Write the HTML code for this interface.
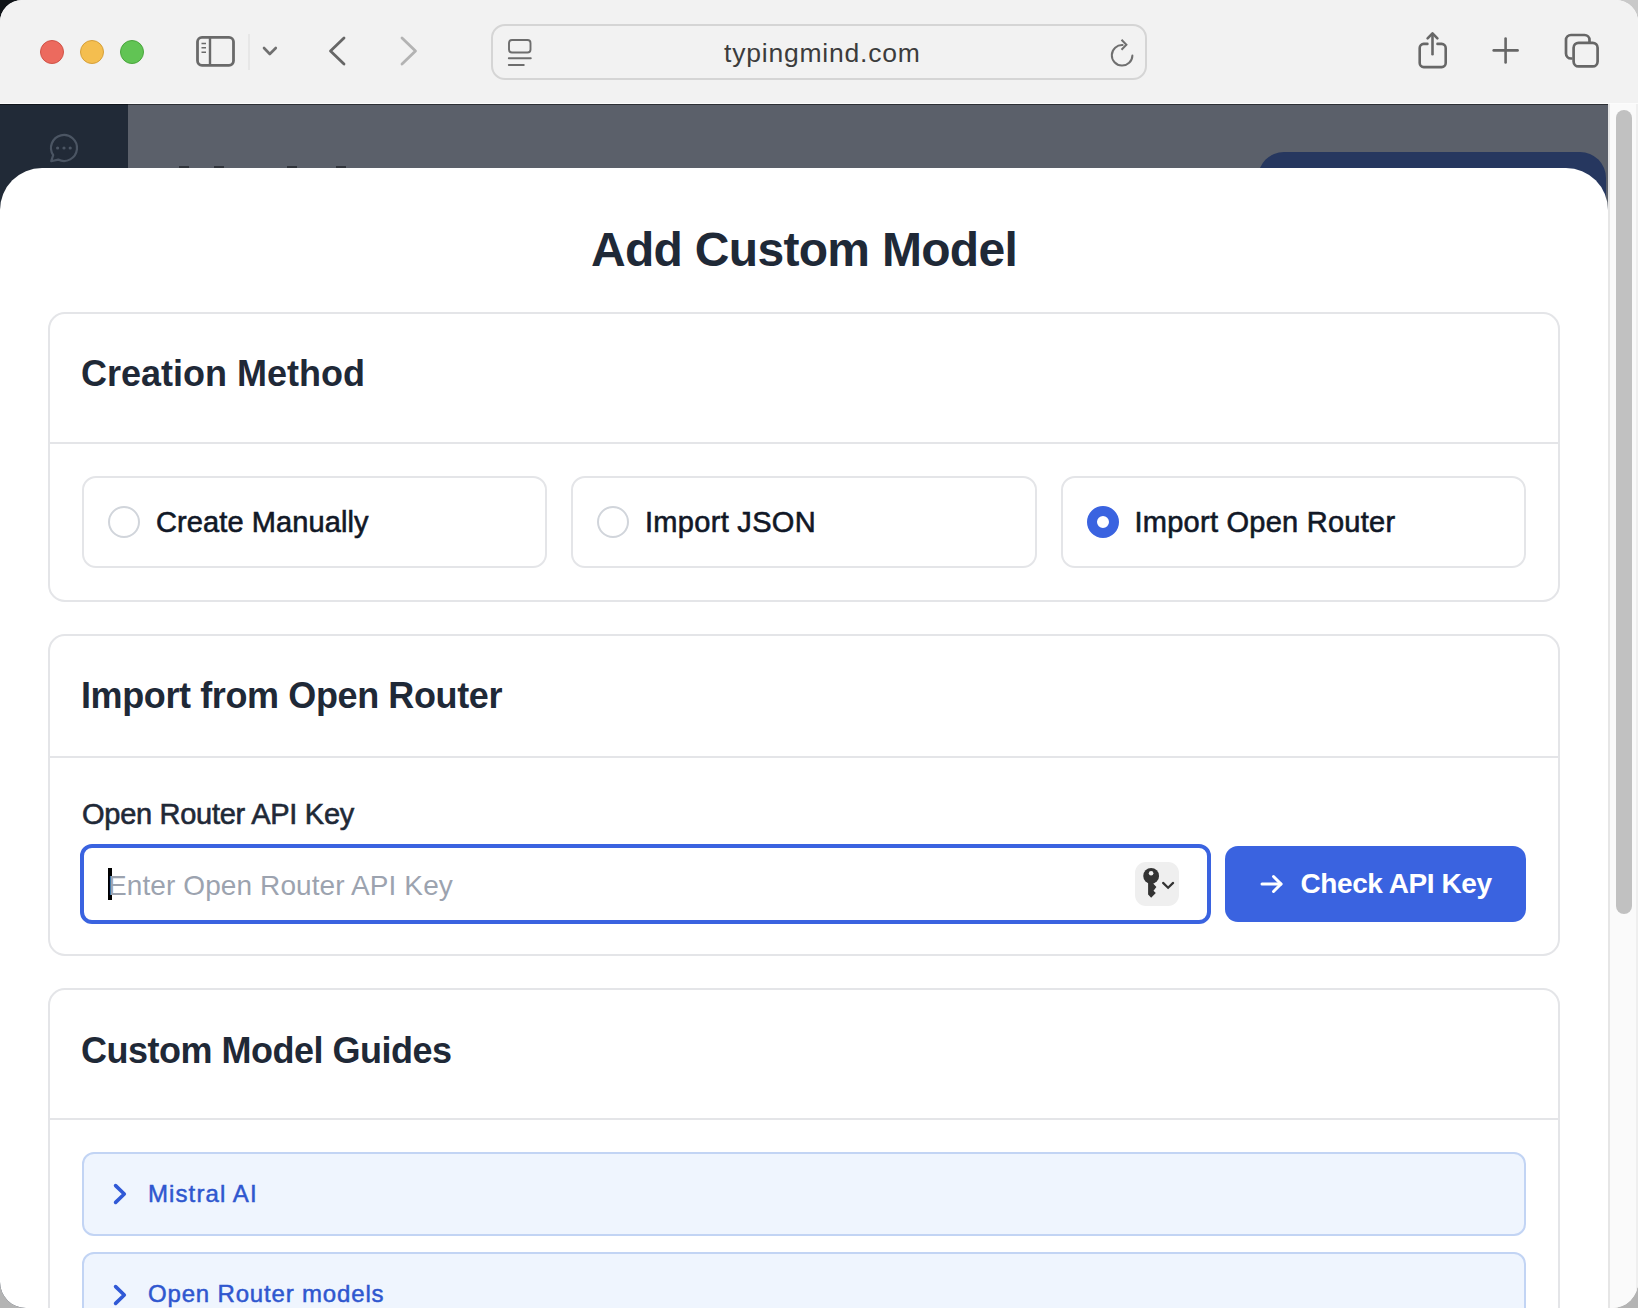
<!DOCTYPE html>
<html><head><meta charset="utf-8">
<style>
*{box-sizing:border-box;margin:0;padding:0}
html,body{width:1638px;height:1308px;overflow:hidden;background:#b4b4b4;font-family:"Liberation Sans",sans-serif}
.abs{position:absolute}
#c-tl{left:0;top:0;width:30px;height:30px;background:#101418}
#c-tr{right:0;top:0;width:30px;height:30px;background:#c9c9c9}
#win{position:absolute;left:0;top:0;width:1638px;height:1308px;border-radius:22px 22px 26px 26px;overflow:hidden;background:#fff}
#toolbar{left:0;top:0;width:1638px;height:104px;background:#f2f2f2}
.tl{position:absolute;width:24px;height:24px;border-radius:50%}
#url{left:491px;top:24px;width:656px;height:56px;border:2px solid #d5d5d5;border-radius:14px}
#urltext{left:724px;top:24.8px;height:56px;line-height:56px;font-size:26.5px;letter-spacing:0.79px;color:#3c3c3c;white-space:nowrap}
#content{left:0;top:104px;width:1608px;height:1204px;background:#5b606a;overflow:hidden}
#sidebar{left:0;top:0;width:128px;height:1204px;background:#212a37}
#topline{left:0;top:104px;width:1608px;height:1px;background:rgba(0,0,0,0.5)}
#wline{left:0;top:103px;width:1638px;height:1px;background:#fcfcfc}
#bgbtn{left:1258px;top:48px;width:348px;height:120px;background:#26375f;border-radius:26px}
#scroll{left:1608px;top:104px;width:30px;height:1204px;background:#fafafa;border-left:2px solid #e6e6e6;border-right:2px solid #efefef}
#thumb{left:1616px;top:110px;width:16px;height:804px;background:#c1c1c1;border-radius:8px}
#modal{left:0;top:168px;width:1608px;height:1200px;background:#fff;border-radius:42px 42px 0 0}
.card{position:absolute;left:48px;width:1512px;border:2px solid #e4e5e8;border-radius:17px;background:#fff}
.hline{position:absolute;left:48px;width:1512px;height:2px;background:#e4e5e8}
.h2{position:absolute;font-weight:bold;color:#1f2937;white-space:nowrap;line-height:1}
.opt{position:absolute;top:476px;height:92px;border:2px solid #e4e5e8;border-radius:14px}
.radio{position:absolute;width:32px;height:32px;border-radius:50%;border:2px solid #d1d5db;top:506px}
.otxt{position:absolute;font-size:28px;color:#111827;white-space:nowrap;line-height:1;-webkit-text-stroke:0.6px currentColor}
.acc{position:absolute;left:82px;width:1444px;height:84px;background:#eff5fe;border:2px solid #c2d4f4;border-radius:12px}
.atxt{position:absolute;font-size:25px;color:#2f57cf;white-space:nowrap;line-height:1;-webkit-text-stroke:0.5px currentColor}
</style></head><body>
<div class="abs" id="c-tl"></div><div class="abs" id="c-tr"></div>
<div id="win">
  <div class="abs" id="toolbar">
    <div class="tl" style="left:40px;top:40px;background:#ec6a5e;border:1px solid #d05347"></div>
    <div class="tl" style="left:80px;top:40px;background:#f4be4f;border:1px solid #d6a03a"></div>
    <div class="tl" style="left:120px;top:40px;background:#61c454;border:1px solid #4aa63d"></div>
    <svg class="abs" style="left:180px;top:20px" width="260" height="60" viewBox="0 0 260 60">
      <rect x="17.5" y="17.3" width="36" height="28" rx="4.5" fill="none" stroke="#6a6a6a" stroke-width="2.8"/>
      <line x1="30" y1="17" x2="30" y2="45.5" stroke="#6a6a6a" stroke-width="2.4"/>
      <line x1="21.5" y1="23.5" x2="26" y2="23.5" stroke="#6a6a6a" stroke-width="1.6"/>
      <line x1="21.5" y1="27.8" x2="26" y2="27.8" stroke="#6a6a6a" stroke-width="1.6"/>
      <line x1="21.5" y1="32.2" x2="26" y2="32.2" stroke="#6a6a6a" stroke-width="1.6"/>
      <line x1="69" y1="14" x2="69" y2="50" stroke="#dcdcdc" stroke-width="1"/>
      <polyline points="84,28 89.8,34 95.8,28" fill="none" stroke="#707070" stroke-width="2.6" stroke-linecap="round" stroke-linejoin="round"/>
      <polyline points="164,18 150.5,31 164,44" fill="none" stroke="#666" stroke-width="2.8" stroke-linecap="round" stroke-linejoin="round"/>
      <polyline points="222,18 235.5,31 222,44" fill="none" stroke="#b3b3b3" stroke-width="2.8" stroke-linecap="round" stroke-linejoin="round"/>
    </svg>
    <div class="abs" id="url"></div>
    <div class="abs" id="urltext">typingmind.com</div>
    <svg class="abs" style="left:500px;top:30px" width="40" height="44" viewBox="0 0 40 44">
      <rect x="9" y="10" width="21.5" height="12.5" rx="3" fill="none" stroke="#6d6d6d" stroke-width="1.9"/>
      <line x1="8.8" y1="28.2" x2="30.8" y2="28.2" stroke="#6d6d6d" stroke-width="1.9" stroke-linecap="round"/>
      <line x1="8.8" y1="35" x2="23.8" y2="35" stroke="#6d6d6d" stroke-width="1.9" stroke-linecap="round"/>
    </svg>
    <svg class="abs" style="left:1100px;top:30px" width="44" height="44" viewBox="0 0 44 44">
      <path d="M32.4 25.6 A10.3 10.3 0 1 1 22.6 15" fill="none" stroke="#6f6f6f" stroke-width="2" stroke-linecap="round"/>
      <polyline points="21.5,9.7 26.4,14.7 21.5,19.7" fill="none" stroke="#6f6f6f" stroke-width="2" stroke-linecap="butt" stroke-linejoin="miter"/>
    </svg>
    <svg class="abs" style="left:1400px;top:20px" width="220" height="60" viewBox="0 0 220 60">
      <path d="M27.4 23.9 H23.7 a4 4 0 0 0 -4 4 V43.1 a4 4 0 0 0 4 4 H41.7 a4 4 0 0 0 4 -4 V27.9 a4 4 0 0 0 -4 -4 H37.5" fill="none" stroke="#676767" stroke-width="2.6" stroke-linecap="round"/>
      <line x1="32.5" y1="14" x2="32.5" y2="34.3" stroke="#676767" stroke-width="2.6" stroke-linecap="round"/>
      <polyline points="27.6,18.4 32.5,13.4 37.4,18.4" fill="none" stroke="#676767" stroke-width="2.6" stroke-linecap="round" stroke-linejoin="round"/>
      <line x1="105.6" y1="18.6" x2="105.6" y2="42.4" stroke="#676767" stroke-width="2.6" stroke-linecap="round"/>
      <line x1="93.7" y1="30.4" x2="117.6" y2="30.4" stroke="#676767" stroke-width="2.6" stroke-linecap="round"/>
      <path d="M172.5 38.5 h-1.5 a5 5 0 0 1 -5 -5 V20 a5 5 0 0 1 5 -5 H184.5 a5 5 0 0 1 5 5 v2" fill="none" stroke="#676767" stroke-width="2.7"/>
      <rect x="173.6" y="22.8" width="24" height="23.6" rx="5" fill="none" stroke="#676767" stroke-width="2.7"/>
    </svg>
  </div>
  <div class="abs" id="content">
    <div class="abs" id="sidebar">
      <svg class="abs" style="left:46px;top:26px" width="36" height="36" viewBox="0 0 36 36">
        <path d="M7.2 25.2 L5.2 31.2 L12.2 29.6 A13 13 0 1 0 7.2 25.2 Z" fill="none" stroke="#4b5563" stroke-width="2.2" stroke-linejoin="round"/>
        <circle cx="11.6" cy="18" r="1.6" fill="#4b5563"/><circle cx="18" cy="18" r="1.6" fill="#4b5563"/><circle cx="24.2" cy="18" r="1.6" fill="#4b5563"/>
      </svg>
    </div>
    <div class="abs" id="bgbtn"></div>
    <div class="abs" style="left:179px;top:62px;width:10px;height:2px;background:#30343b"></div>
    <div class="abs" style="left:214px;top:62px;width:10px;height:2px;background:#30343b"></div>
    <div class="abs" style="left:287px;top:62px;width:10px;height:2px;background:#30343b"></div>
    <div class="abs" style="left:336px;top:62px;width:10px;height:2px;background:#30343b"></div>
  </div>
  <div class="abs" id="topline"></div><div class="abs" id="wline"></div>
  <div class="abs" id="scroll"></div>
  <div class="abs" id="thumb"></div>

  <div class="abs" id="modal"></div>
  <div class="h2" style="left:591px;top:226px;font-size:48px;letter-spacing:-0.7px">Add Custom Model</div>

  <!-- card 1 -->
  <div class="card" style="top:312px;height:290px"></div>
  <div class="hline" style="top:442px"></div>
  <div class="h2" style="left:81px;top:356px;font-size:36px">Creation Method</div>
  <div class="opt" style="left:82px;width:465px"></div>
  <div class="opt" style="left:571px;width:466px"></div>
  <div class="opt" style="left:1061px;width:465px"></div>
  <div class="radio" style="left:108px"></div>
  <div class="radio" style="left:597px"></div>
  <div class="radio" style="left:1087px;border:10px solid #3a63e0;background:#fff"></div>
  <div class="otxt" style="left:156px;top:508.3px;font-size:29px;letter-spacing:0.1px">Create Manually</div>
  <div class="otxt" style="left:645px;top:508.3px;font-size:29px;letter-spacing:0.3px">Import JSON</div>
  <div class="otxt" style="left:1134.5px;top:508.3px;font-size:29px;letter-spacing:0.25px">Import Open Router</div>

  <!-- card 2 -->
  <div class="card" style="top:634px;height:322px"></div>
  <div class="hline" style="top:756px"></div>
  <div class="h2" style="left:81px;top:678px;font-size:36px;letter-spacing:-0.39px">Import from Open Router</div>
  <div class="otxt" style="left:82px;top:799.8px;font-size:29px;color:#1f2937;letter-spacing:-0.28px">Open Router API Key</div>
  <div class="abs" style="left:80px;top:844px;width:1131px;height:80px;border:4px solid #3a63e0;border-radius:12px;background:#fff"></div>
  <div class="abs" style="left:108px;top:868px;width:4px;height:32px;background:#000"></div>
  <div class="otxt" style="left:108px;top:871.5px;color:#9ca3af;letter-spacing:0.1px;-webkit-text-stroke:0">Enter Open Router API Key</div>
  <div class="abs" style="left:1135px;top:862px;width:44px;height:44px;background:#efefef;border-radius:11px"></div>
  <svg class="abs" style="left:1135px;top:862px" width="44" height="44" viewBox="0 0 44 44">
    <circle cx="16.15" cy="13.9" r="7.9" fill="#333"/>
    <path d="M13.1 19 V32.6 L16.15 35.7 L20.8 31.1 L18.5 28.8 L21.4 25 L18.4 21.8 V19 Z" fill="#333"/>
    <circle cx="16.1" cy="11.2" r="2.3" fill="#efefef"/>
    <polyline points="28.1,20.9 33.1,25.8 38.1,20.9" fill="none" stroke="#333" stroke-width="2.2" stroke-linecap="round" stroke-linejoin="miter"/>
  </svg>
  <div class="abs" style="left:1225px;top:846px;width:301px;height:76px;background:#3a63e0;border-radius:13px"></div>
  <svg class="abs" style="left:1255px;top:868px" width="32" height="32" viewBox="0 0 32 32">
    <line x1="7" y1="16" x2="26" y2="16" stroke="#fff" stroke-width="3" stroke-linecap="round"/>
    <polyline points="18.5,8.5 26,16 18.5,23.5" fill="none" stroke="#fff" stroke-width="3" stroke-linecap="round" stroke-linejoin="round"/>
  </svg>
  <div class="otxt" style="left:1300.5px;top:870px;color:#fff;font-weight:bold;letter-spacing:-0.42px;-webkit-text-stroke:0">Check API Key</div>

  <!-- card 3 -->
  <div class="card" style="top:988px;height:400px"></div>
  <div class="hline" style="top:1118px"></div>
  <div class="h2" style="left:81px;top:1032.5px;font-size:36px;letter-spacing:-0.5px">Custom Model Guides</div>
  <div class="acc" style="top:1152px"></div>
  <div class="acc" style="top:1252px"></div>
  <svg class="abs" style="left:106px;top:1180px" width="24" height="28" viewBox="0 0 24 28">
    <polyline points="9.6,5.6 18.3,14 9.6,22.4" fill="none" stroke="#3059d6" stroke-width="3.6" stroke-linecap="round" stroke-linejoin="round"/>
  </svg>
  <svg class="abs" style="left:106px;top:1280.5px" width="24" height="28" viewBox="0 0 24 28">
    <polyline points="9.6,5.6 18.3,14 9.6,22.4" fill="none" stroke="#3059d6" stroke-width="3.6" stroke-linecap="round" stroke-linejoin="round"/>
  </svg>
  <div class="atxt" style="left:148px;top:1182px;font-size:24px;letter-spacing:1.1px">Mistral AI</div>
  <div class="atxt" style="left:148px;top:1281.5px;font-size:24px;letter-spacing:0.83px">Open Router models</div>
</div>
</body></html>
